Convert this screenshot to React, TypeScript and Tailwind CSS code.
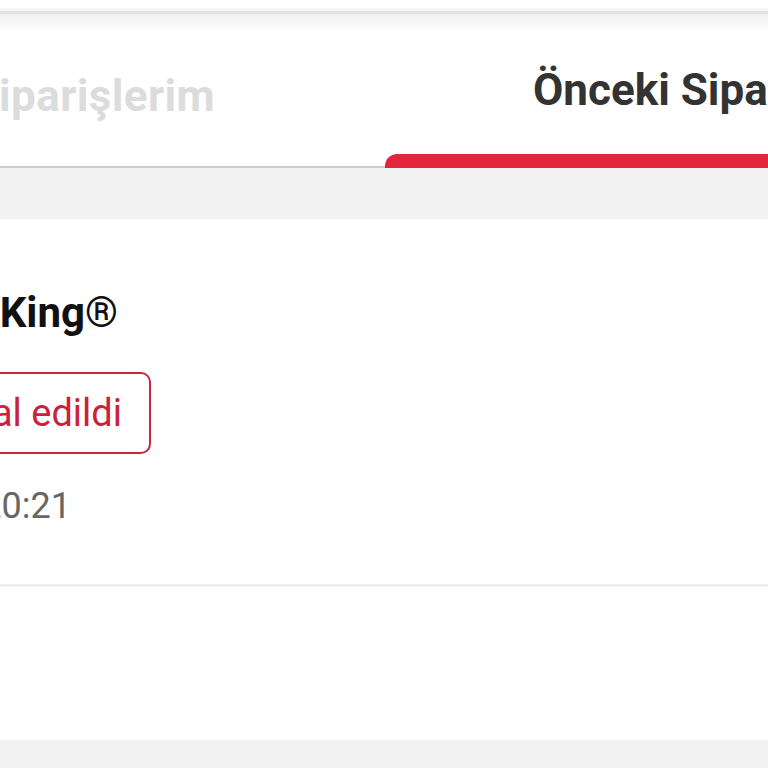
export default function App() {
  return (
    <div className="w-[768px] h-[768px] overflow-hidden bg-[#f1f1f1] flex flex-col" style={{ fontFamily: 'Roboto, "Noto Sans", sans-serif' }}>
      {/* ── top bar edge ─────────────────────────────── */}
      <div className="h-[8px] bg-white shrink-0" />
      <div className="h-[3px] bg-[#f6f6f6] shrink-0" />
      <div className="h-[3px] bg-[#e2e2e2] shrink-0" />

      {/* ── tabs ─────────────────────────────────────── */}
      <div className="h-[154px] shrink-0 flex bg-gradient-to-b from-[#f0f0f0] via-white via-[12%] to-white">
        <div className="w-[385px] flex flex-col border-b-2 border-[#cdcdcd]">
          <div className="flex-1 flex justify-end items-center pr-[170px] pt-[12px] overflow-hidden">
            <span className="whitespace-nowrap text-[44px] font-bold text-[#dcdcdc] tracking-[0.4px]">Aktif Siparişlerim</span>
          </div>
        </div>
        <div className="flex-1 flex flex-col">
          <div className="flex-1 flex items-center pl-[148px] pt-[12px] overflow-hidden">
            <span className="whitespace-nowrap text-[44px] font-bold text-[#333333]">Önceki Siparişlerim</span>
          </div>
          <div className="h-[14px] bg-[#e3263b] rounded-tl-[12px]" />
        </div>
      </div>

      {/* ── gap ──────────────────────────────────────── */}
      <div className="h-[51px] shrink-0 bg-[#f1f1f1]" />

      {/* ── order card ───────────────────────────────── */}
      <div className="h-[365px] shrink-0 bg-white flex flex-col pt-[68px] overflow-hidden">
        <div className="w-[118px] flex justify-end">
          <span className="whitespace-nowrap text-[42px] leading-[52px] font-bold text-[#111111]">Burger King®</span>
        </div>
        <div className="w-[151px] flex justify-end mt-[33px]">
          <div className="shrink-0 whitespace-nowrap border-2 border-[#c9293f] rounded-[10px] h-[82px] flex items-center pl-[24px] pr-[27px]">
            <span className="text-[38px] text-[#c8233a]">İptal edildi</span>
          </div>
        </div>
        <div className="w-[71px] flex justify-end mt-[30px]">
          <span className="whitespace-nowrap text-[36px] leading-[44px] text-[#666666]">12.05.2023 20:21</span>
        </div>
      </div>

      <div className="h-[3px] shrink-0 bg-[#eeeeee]" />

      {/* ── next card ────────────────────────────────── */}
      <div className="h-[152px] shrink-0 bg-white" />
      <div className="h-[2px] shrink-0 bg-[#f7f7f7]" />
    </div>
  );
}
